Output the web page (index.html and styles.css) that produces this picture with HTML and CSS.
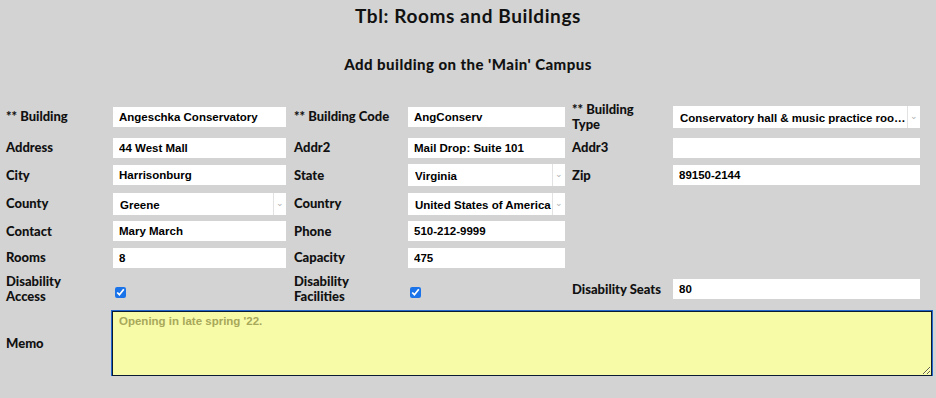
FILE: index.html
```html
<!DOCTYPE html>
<html lang="en">
<head>
    <meta charset="UTF-8">
    <meta name="viewport" content="width=device-width, initial-scale=1.0">
    <title>Tbl: Rooms and Buildings</title>
    <link rel="stylesheet" href="styles.css">
</head>
<body>

    <h1>Tbl: Rooms and Buildings</h1>
    <h3>Add building on the 'Main' Campus</h3>

    <form class="building-form">
        <label for="building">** Building</label>
        <input type="text" id="building" value="Angeschka Conservatory">
        <label for="code">** Building Code</label>
        <input type="text" id="code" value="AngConserv">
        <label for="type" class="two-line tight">** Building Type</label>
        <div class="select-wrap wide">
            <select id="type">
                <option>Conservatory hall &amp; music practice rooms</option>
            </select>
        </div>

        <label for="addr">Address</label>
        <input type="text" id="addr" value="44 West Mall">
        <label for="addr2">Addr2</label>
        <input type="text" id="addr2" value="Mail Drop: Suite 101">
        <label for="addr3">Addr3</label>
        <input type="text" id="addr3" value="">

        <label for="city">City</label>
        <input type="text" id="city" value="Harrisonburg">
        <label for="state">State</label>
        <div class="select-wrap mid">
            <select id="state"><option>Virginia</option></select>
        </div>
        <label for="zip">Zip</label>
        <input type="text" id="zip" value="89150-2144">

        <label for="county">County</label>
        <div class="select-wrap">
            <select id="county"><option>Greene</option></select>
        </div>
        <label for="country">Country</label>
        <div class="select-wrap mid">
            <select id="country"><option>United States of America</option></select>
        </div>
        <span class="empty"></span>
        <span class="empty"></span>

        <label for="contact">Contact</label>
        <input type="text" id="contact" value="Mary March">
        <label for="phone">Phone</label>
        <input type="text" id="phone" value="510-212-9999">
        <span class="empty"></span>
        <span class="empty"></span>

        <label for="rooms">Rooms</label>
        <input type="text" id="rooms" value="8">
        <label for="capacity">Capacity</label>
        <input type="text" id="capacity" value="475">
        <span class="empty"></span>
        <span class="empty"></span>

        <label for="access" class="two-line">Disability Access</label>
        <div class="check"><input type="checkbox" id="access" checked></div>
        <label for="facilities" class="two-line">Disability Facilities</label>
        <div class="check"><input type="checkbox" id="facilities" checked></div>
        <label for="seats">Disability Seats</label>
        <input type="text" id="seats" value="80">

        <label for="memo">Memo</label>
        <textarea id="memo" class="memo">Opening in late spring '22.</textarea>
    </form>

</body>
</html>
```

FILE: styles.css
```css
body {
    margin: 0;
    background: #d3d3d3;
    font-family: Lato, "Open Sans", sans-serif;
    color: #111;
}
h1 {
    margin: 0;
    padding-top: 4px;
    text-align: center;
    font-size: 19px;
    font-weight: bold;
    letter-spacing: 0.6px;
    line-height: 24px;
}
h3 {
    margin: 27px 0 0;
    text-align: center;
    font-size: 15px;
    font-weight: 900;
    letter-spacing: 0.45px;
    line-height: 18px;
}
.building-form {
    display: grid;
    grid-template-columns: 107px 181px 114px 164px 101px 247px;
    row-gap: 6.5px;
    align-items: center;
    margin: 29px 0 0 6px;
}
label {
    font-size: 13px;
    font-weight: 900;
    line-height: 15px;
}
.two-line {
    width: 80px;
}
.tight {
    line-height: 14.5px;
}
input[type="text"] {
    box-sizing: border-box;
    height: 20px;
    border: none;
    padding: 0 6px;
    background: white;
    font-family: "Liberation Sans", Arial, sans-serif;
    font-size: 11.5px;
    font-weight: bold;
    color: #000;
    outline: none;
}
#building, #addr, #city, #contact, #rooms { width: 173px; }
#code, #addr2, #phone, #capacity { width: 157px; }
#addr3, #zip, #seats { width: 247px; }
.select-wrap {
    position: relative;
    width: 173px;
    height: 22px;
}
.select-wrap.mid { width: 157px; }
.select-wrap.wide { width: 247px; }
.select-wrap::after {
    content: "\2304";
    position: absolute;
    top: 0;
    right: 0;
    width: 12px;
    height: 22px;
    border-left: 1px solid #e2e2e2;
    color: #b0b0b0;
    font-size: 9px;
    line-height: 19px;
    text-align: center;
    pointer-events: none;
}
select {
    appearance: none;
    box-sizing: border-box;
    width: 100%;
    height: 22px;
    border: none;
    padding: 2px 13px 0 7px;
    background: white;
    font-family: "Liberation Sans", Arial, sans-serif;
    font-size: 11.5px;
    font-weight: bold;
    color: #000;
    text-overflow: ellipsis;
    white-space: nowrap;
    overflow: hidden;
    outline: none;
}
.check {
    padding-top: 4px;
}
.check input {
    width: 11px;
    height: 11px;
    margin: 0 0 0 2px;
    accent-color: #1a73e8;
}
.memo {
    grid-column: 2 / 7;
    box-sizing: border-box;
    width: 820px;
    height: 65px;
    margin: 0 0 0 -1px;
    padding: 3px 6px;
    border: 1px solid #0b1a33;
    box-shadow: 0 0 0 1px #2366cc;
    background: #f7fba8;
    font-family: "Liberation Sans", Arial, sans-serif;
    font-size: 11.5px;
    font-weight: bold;
    color: #a8a85a;
    outline: none;
    resize: both;
}
```
